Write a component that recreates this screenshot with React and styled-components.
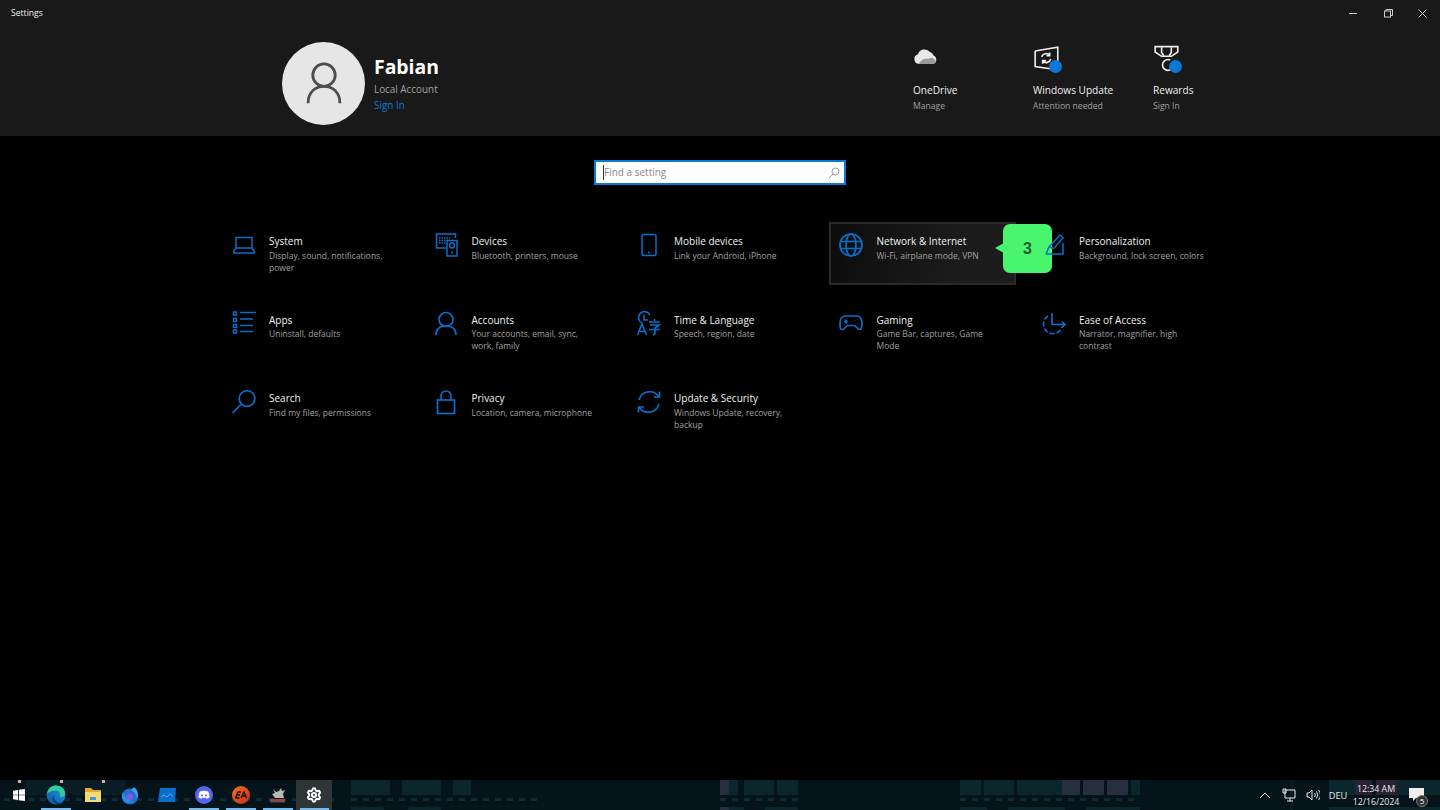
import React from "react";
import styled, { createGlobalStyle } from "styled-components";
import { Settings } from "lucide-react";

const BLUE = "#0a6fc9";
const FONT = `"Open Sans", "Noto Sans", "Liberation Sans", sans-serif`;

const GlobalStyle = createGlobalStyle`
    html, body {
        margin: 0;
        padding: 0;
        background: #000;
    }
    body {
        font-family: ${FONT};
        overflow: hidden;
    }
`;

const Page = styled.div`
    display: flex;
    flex-direction: column;
    width: 1440px;
    height: 810px;
    background: #000;
    color: #fff;
`;

const Header = styled.header`
    height: 136px;
    background: #191919;
    flex: none;
`;

const TitleBar = styled.div`
    display: flex;
    align-items: center;
    justify-content: space-between;
    height: 26px;
    padding-left: 11px;
    font-size: 8.6px;
    color: #f0f0f0;
`;

const TitleText = styled.span`
    margin-bottom: 1px;
`;

const WindowControls = styled.div`
    display: flex;
`;

const WindowButton = styled.div`
    display: flex;
    align-items: center;
    justify-content: center;
    width: 34.5px;
    height: 26px;
`;

const AccountRow = styled.div`
    display: flex;
    padding: 16px 0 0 282px;
`;

const Account = styled.div`
    display: flex;
    gap: 9px;
    width: 631px;
`;

const Avatar = styled.div`
    display: flex;
    align-items: center;
    justify-content: center;
    width: 83px;
    height: 83px;
    border-radius: 50%;
    background: #e6e6e6;
`;

const AccountText = styled.div`
    display: flex;
    flex-direction: column;
    padding-top: 11px;
`;

const AccountName = styled.div`
    font-size: 19.4px;
    line-height: 28px;
    font-weight: 700;
`;

const AccountKind = styled.div`
    font-size: 9.9px;
    line-height: 16px;
    color: #a0a0a0;
`;

const SignIn = styled.a`
    font-size: 9.9px;
    line-height: 16px;
    color: #0a78d6;
`;

const Services = styled.div`
    display: flex;
`;

const Service = styled.div`
    width: 120px;
`;

const ServiceIcon = styled.div`
    position: relative;
    width: 34px;
    height: 30px;
    margin-top: 3px;
`;

const Dot = styled.span`
    position: absolute;
    left: 16px;
    top: 15px;
    width: 13px;
    height: 13px;
    border-radius: 50%;
    background: #0a78d6;
`;

const ServiceTitle = styled.div`
    margin-top: 7px;
    font-size: 10.1px;
    line-height: 16px;
    color: #f0f0f0;
`;

const ServiceSub = styled.div`
    font-size: 8.6px;
    line-height: 16px;
    color: #a0a0a0;
`;

const SearchRow = styled.div`
    display: flex;
    justify-content: center;
    padding-top: 24px;
    flex: none;
`;

const SearchBox = styled.div`
    box-sizing: border-box;
    display: flex;
    align-items: center;
    justify-content: space-between;
    width: 252px;
    height: 25px;
    padding: 0 4px 0 7px;
    background: #fff;
    border: 2px solid #0a78d6;
    font-size: 10px;
    color: #8a8a8a;
`;

const Placeholder = styled.span`
    border-left: 1px solid #333;
    line-height: 15px;
`;

const Grid = styled.main`
    display: grid;
    grid-template-columns: repeat(5, 187px);
    grid-auto-rows: 63px;
    column-gap: 15.5px;
    row-gap: 15.7px;
    width: 997px;
    margin: 37px auto 0;
`;

const Cell = styled.div`
    position: relative;
    box-sizing: border-box;
    display: flex;
    padding: 8px 0 0 7px;
    border: 2px solid ${(p) => (p.$hover ? "#2b2b2b" : "transparent")};
    background: ${(p) =>
        p.$hover ? "linear-gradient(100deg, #0c0c0c 0%, #1c1c1c 70%)" : "transparent"};
`;

const CellIcon = styled.div`
    width: 26px;
    height: 26px;
    flex: none;
`;

const CellText = styled.div`
    margin-left: 12.5px;
    width: 128px;
`;

const CellTitle = styled.div`
    margin-top: 1px;
    font-size: 10px;
    line-height: 16.5px;
    color: #f2f2f2;
`;

const CellDesc = styled.div`
    font-size: 8.5px;
    line-height: 12px;
    color: #a0a0a0;
`;

const Badge = styled.div`
    position: absolute;
    left: 172px;
    top: 0;
    display: flex;
    align-items: center;
    justify-content: center;
    width: 49px;
    height: 49px;
    border-radius: 7px;
    background: #49f56c;
    color: #1d5a32;
    font-family: "Liberation Sans", sans-serif;
    font-size: 16px;
    font-weight: 700;
    &::before {
        content: "";
        position: absolute;
        left: -8px;
        top: 19px;
        border-style: solid;
        border-width: 5.5px 9px 5.5px 0;
        border-color: transparent #49f56c transparent transparent;
    }
`;

const Taskbar = styled.footer`
    position: relative;
    display: flex;
    align-items: stretch;
    justify-content: space-between;
    height: 30px;
    margin-top: auto;
    background: #05141a;
    flex: none;
`;

const Wallpaper = styled.svg`
    position: absolute;
    left: 0;
    top: 0;
`;

const TaskIcons = styled.div`
    position: relative;
    display: flex;
`;

const TaskButton = styled.div`
    position: relative;
    display: flex;
    align-items: center;
    justify-content: center;
    width: ${(p) => (p.$active ? "36px" : "37px")};
    background: ${(p) => (p.$active ? "#2e3638" : "transparent")};
    &::after {
        content: "";
        display: ${(p) => (p.$open ? "block" : "none")};
        position: absolute;
        left: 3.5px;
        right: 3.5px;
        bottom: 0;
        height: 2px;
        background: #76b9ed;
    }
`;

const Pip = styled.span`
    position: absolute;
    top: 0;
    left: ${(p) => p.$left}px;
    width: 3px;
    height: 3px;
    background: #e0a898;
`;

const Tray = styled.div`
    position: relative;
    display: flex;
    align-items: center;
    padding-right: 12px;
    color: #e8e8e8;
`;

const TrayIcon = styled.div`
    display: flex;
    align-items: center;
    justify-content: center;
    width: 24px;
`;

const TrayLang = styled.div`
    width: 26px;
    text-align: center;
    font-size: 9.2px;
`;

const Clock = styled.div`
    width: 50px;
    margin: 2px 3px 0 0;
    text-align: center;
    font-size: 8.8px;
    line-height: 13px;
`;

const Notify = styled.div`
    position: relative;
    display: flex;
    justify-content: center;
    width: 24px;
`;

const NotifyCount = styled.span`
    position: absolute;
    left: 12px;
    top: 7px;
    width: 12px;
    height: 12px;
    border-radius: 50%;
    background: #333;
    border: 1px solid #777;
    box-sizing: border-box;
    text-align: center;
    font-size: 8px;
    line-height: 10px;
    color: #fff;
`;

const Line = ({ children, size = 26, w = 1.5, stroke = BLUE }) => (
    <svg width={size} height={size} viewBox="0 0 26 26" fill="none" stroke={stroke} strokeWidth={w}>
        {children}
    </svg>
);

const ICONS = {
    system: (
        <Line>
            <path d="M5 16V5.500h16V16" />
            <path d="M2.700 21h20.600v-1.600L21 16H5l-2.300 3.400z" />
        </Line>
    ),
    devices: (
        <Line>
            <path d="M13 16H3.500V2h19v4" />
            <path d="M6 6h11M6 8.500h11M6 11h7" strokeDasharray="1.500 1" />
            <rect x="14" y="8.500" width="10" height="15.500" />
            <circle cx="19" cy="13.500" r="2.500" />
            <path d="M18 20.500h2" />
        </Line>
    ),
    mobile: (
        <Line>
            <rect x="6" y="2.500" width="14" height="21" rx="1.500" />
            <path d="M12 20.500h2" />
        </Line>
    ),
    network: (
        <Line w={1.700}>
            <circle cx="13" cy="13" r="11" />
            <ellipse cx="13" cy="13" rx="5" ry="11" />
            <path d="M2.500 9.500h21M2.500 16.500h21" />
        </Line>
    ),
    personalization: (
        <Line>
            <path d="M8 15L19 3l3 2.500-9 11" />
            <path d="M22 11v11H5" />
            <path d="M5 22l3-7 5 1.500" />
        </Line>
    ),
    apps: (
        <Line>
            <path d="M2.500 1h3v3h-3zM2.500 7.500h3v3h-3zM2.500 13.500h3v3h-3zM2.500 19h3v3h-3z" />
            <path d="M9 1.500h16M9 8h13M9 14.500h13M9 20.500h13" strokeWidth="1.700" />
        </Line>
    ),
    accounts: (
        <Line w={1.700}>
            <circle cx="13" cy="8.500" r="7" />
            <path d="M3 24c0-6 4-9 10-9s10 3 10 9" />
        </Line>
    ),
    time: (
        <Line w={1.600}>
            <path d="M6 12a6 6 0 1 1 8-8" />
            <path d="M8 4v5h4" />
            <path d="M1.500 24L6 13l4.500 11M3 20.500h6" />
            <path d="M13 11h11M18.500 8v2M14 14h9l-4 3v6l-2 1M13 18.500h11" />
        </Line>
    ),
    gaming: (
        <Line w={1.700}>
            <path d="M7 5h12c3 0 5 3 5 7.500s-.500 6-2.500 6-3.500-4-5.500-4h-6c-2 0-3.500 4-5.500 4S2 17.500 2 12.500 4 5 7 5z" />
            <path d="M6 10.500h4M8 8.500v4M16.500 9.500h.5M19 12h.5" />
        </Line>
    ),
    ease: (
        <Line w={1.700}>
            <path d="M7 5a9.500 9.500 0 1 0 14 11" strokeDasharray="5 2" />
            <path d="M11 2v11.500h13M21 10.500l3 3-3 3" />
        </Line>
    ),
    search: (
        <Line w={1.700}>
            <circle cx="16" cy="9.500" r="7.800" />
            <path d="M10.500 15L1.500 24" />
        </Line>
    ),
    privacy: (
        <Line w={1.700}>
            <rect x="4.500" y="11" width="17" height="13.500" />
            <path d="M8 11V7a5 5 0 0 1 10 0v4" />
        </Line>
    ),
    update: (
        <Line w={1.700}>
            <path d="M3 11a11 11 0 0 1 20-3" />
            <path d="M23.500 2.500V8H18" />
            <path d="M23 15a11 11 0 0 1-20 3" />
            <path d="M2.500 23.500V18H8" />
        </Line>
    ),
};

const SETTINGS = [
    ["system", "System", "Display, sound, notifications, power"],
    ["devices", "Devices", "Bluetooth, printers, mouse"],
    ["mobile", "Mobile devices", "Link your Android, iPhone"],
    ["network", "Network & Internet", "Wi-Fi, airplane mode, VPN"],
    ["personalization", "Personalization", "Background, lock screen, colors"],
    ["apps", "Apps", "Uninstall, defaults"],
    ["accounts", "Accounts", "Your accounts, email, sync, work, family"],
    ["time", "Time & Language", "Speech, region, date"],
    ["gaming", "Gaming", "Game Bar, captures, Game Mode"],
    ["ease", "Ease of Access", "Narrator, magnifier, high contrast"],
    ["search", "Search", "Find my files, permissions"],
    ["privacy", "Privacy", "Location, camera, microphone"],
    ["update", "Update & Security", "Windows Update, recovery, backup"],
];

const OneDriveIcon = () => (
    <svg width="26" height="22" viewBox="0 0 26 20">
        <path d="M6 18a5 5 0 0 1-1-9.800A7 7 0 0 1 17 6a5 5 0 0 1 3.500 3.500A4.500 4.500 0 0 1 20 18z" fill="#e8e8e8" />
        <path d="M6 18c1-4 6-6 9-5 3-2 7-1 8 3l-3 2z" fill="#9a9a9a" />
    </svg>
);

const UpdateIcon = () => (
    <svg width="28" height="28" viewBox="0 0 26 26" fill="none" stroke="#eee" strokeWidth="1.500">
        <path d="M2 5.500L23 2v14M16 22L2 20V5.500" />
        <path d="M8 11a4.500 4.500 0 0 1 7.500-1.500M16.500 13A4.500 4.500 0 0 1 9 15M15.500 7v3h-3M9 17.500v-3h3" />
    </svg>
);

const RewardsIcon = () => (
    <svg width="28" height="28" viewBox="0 0 26 26" fill="none" stroke="#eee" strokeWidth="1.500">
        <path d="M2 1.500h21v5l-6 4h-9l-6-4z" />
        <path d="M8 2v5l2 3M17 2v5l-2 3" />
        <path d="M16 14a5 5 0 1 0 0 9" />
    </svg>
);

const SearchGlyph = () => (
    <svg width="12" height="12" viewBox="0 0 12 12" fill="none" stroke="#9a9a9a">
        <circle cx="7.500" cy="4.500" r="3.500" />
        <path d="M5 7l-4 4" />
    </svg>
);

const TOP_BLOCKS = [
    [351, 39], [402, 39], [453, 18],
    [729, 9], [744, 30], [777, 21],
    [960, 21], [984, 30], [1017, 45],
    [1131, 9],
    [1329, 26], [1397, 43],
];
const TOP_PURPLE = [[720, 9], [1062, 18], [1083, 21], [1107, 21]];
const TOP_PINK = [[1355, 17], [1376, 21]];
const LOW_BLOCKS = [
    [351, 33], [408, 33], [729, 15], [765, 33], [960, 27], [1008, 57], [1086, 54], [1329, 111],
];
const DASH_RUNS = [[351, 16], [720, 7], [960, 15], [4, 28]];

const TaskbarWallpaper = () => (
    <Wallpaper width="1440" height="30" viewBox="0 0 1440 30">
        <g fill="#0b272d">
            {TOP_BLOCKS.map(([x, w]) => (
                <rect key={x} x={x} y="0" width={w} height="15" />
            ))}
            {LOW_BLOCKS.map(([x, w]) => (
                <rect key={x} x={x} y="27" width={w} height="3" />
            ))}
            <rect x="25" y="0" width="100" height="15" opacity="0.5" />
        </g>
        <g fill="#262f40">
            {TOP_PURPLE.map(([x, w]) => (
                <rect key={x} x={x} y="0" width={w} height="15" />
            ))}
            <rect x="720" y="27" width="9" height="3" />
        </g>
        <g fill="#2a2233">
            {TOP_PINK.map(([x, w]) => (
                <rect key={x} x={x} y="0" width={w} height="15" />
            ))}
        </g>
        <g fill="#0f2a30">
            {DASH_RUNS.flatMap(([start, n]) =>
                Array.from({ length: n }, (_, i) => (
                    <rect key={`${start}-${i}`} x={start + i * 12} y="18" width="6" height="3" />
                ))
            )}
        </g>
        <rect x="1290" y="0" width="3" height="30" fill="#0a1c24" />
    </Wallpaper>
);

const TASK_APPS = [
    {
        key: "start",
        icon: (
            <svg width="12" height="12" viewBox="0 0 14 14" fill="#fff">
                <path d="M0 2l6-.9V6.600H0zM7 .9L14 0v6.600H7zM0 7.400h6v5.500L0 12zM7 7.400h7V14l-7-1z" />
            </svg>
        ),
    },
    {
        key: "edge",
        open: true,
        icon: (
            <svg width="20" height="20" viewBox="0 0 20 20">
                <defs>
                    <linearGradient id="edgeA" x1="0" y1="1" x2="1" y2="0">
                        <stop offset="0" stopColor="#0c59a4" />
                        <stop offset="1" stopColor="#1b9de2" />
                    </linearGradient>
                </defs>
                <circle cx="10" cy="10" r="9.500" fill="url(#edgeA)" />
                <path d="M1 9C2 3 6 .500 10 .500c5 0 9 3.500 9 8 0 3-3 4-5 3 1-3-1-6-4-6C6 5.500 2.500 7 1 9z" fill="#36c99a" />
                <path d="M8 10c-1 4 2 8 7 8 1 0 2-.500 3-1-3 3-8 3-10.500 0C6 15 6 12 8 10z" fill="#0f3d7a" />
            </svg>
        ),
    },
    {
        key: "explorer",
        icon: (
            <svg width="18" height="16" viewBox="0 0 18 16">
                <path d="M1 1h6l2 2h8v3H1z" fill="#e5a92f" />
                <path d="M1 5h16v10H1z" fill="#f8d775" />
                <path d="M6 10h6v3H6z" fill="#3b9ad9" />
            </svg>
        ),
    },
    {
        key: "firefox",
        icon: (
            <svg width="18" height="19" viewBox="0 0 18 19">
                <circle cx="9" cy="10.500" r="8" fill="#1e6fd0" />
                <path d="M13 1c4 3 5 8 3 12-1-5-3-8-6-9 1-1 2-2 3-3z" fill="#3aa0ee" />
                <circle cx="8.500" cy="11" r="3.500" fill="#7b5be0" />
                <path d="M2 6c1 5 5 9 10 9-3 2.500-9 2-11-3-.500-2 0-4 1-6z" fill="#2b8fe8" />
            </svg>
        ),
    },
    {
        key: "monitor",
        icon: (
            <svg width="18" height="14" viewBox="0 0 18 14">
                <path d="M2 0h16l-1 14H0z" fill="#0a6fc9" />
                <path d="M3 9l3-2 3 2 3-3 3 2" fill="none" stroke="#6ab4ee" strokeWidth="0.800" />
            </svg>
        ),
    },
    {
        key: "discord",
        open: true,
        icon: (
            <svg width="18" height="18" viewBox="0 0 18 18">
                <circle cx="9" cy="9" r="9" fill="#5865f2" />
                <path d="M5 5.500c2.500-1 5.500-1 8 0 1 1.500 1.500 3.500 1.500 6-1 .7-2 1.200-3 1.300l-.8-1.100H7.300l-.8 1.100c-1-.1-2-.6-3-1.300 0-2.500.5-4.500 1.500-6z" fill="#fff" />
                <circle cx="7" cy="9.500" r="1.100" fill="#5865f2" />
                <circle cx="11" cy="9.500" r="1.100" fill="#5865f2" />
            </svg>
        ),
    },
    {
        key: "ea",
        open: true,
        icon: (
            <svg width="18" height="18" viewBox="0 0 18 18">
                <defs>
                    <linearGradient id="eaA" x1="0" y1="0" x2="1" y2="1">
                        <stop offset="0" stopColor="#f4711f" />
                        <stop offset="1" stopColor="#c22e1a" />
                    </linearGradient>
                </defs>
                <circle cx="9" cy="9" r="9" fill="url(#eaA)" />
                <path d="M3.500 12L6 6h3M5 9h3M3.500 12h4M9 12l3-6 2.500 6M11 10h3" fill="none" stroke="#1a0c08" strokeWidth="1.300" />
            </svg>
        ),
    },
    {
        key: "gimp",
        open: true,
        icon: (
            <svg width="18" height="18" viewBox="0 0 18 18">
                <path d="M4 3l3 3 3-1 2-3 1 3 3-1-2 4 1 4H6L3 8l3-1z" fill="#b9b9b9" />
                <rect x="1" y="13" width="15" height="2" fill="#b33a3a" />
                <rect x="1" y="15" width="15" height="1.500" fill="#555" />
            </svg>
        ),
    },
    {
        key: "settings",
        open: true,
        active: true,
        icon: <Settings size={16} color="#fff" strokeWidth={3} />,
    },
];

const App = () => (
    <Page>
        <GlobalStyle />
        <Header>
            <TitleBar>
                <TitleText>Settings</TitleText>
                <WindowControls>
                    <WindowButton>
                        <svg width="9" height="9" viewBox="0 0 9 9" stroke="#ccc"><path d="M0 4.500h8" /></svg>
                    </WindowButton>
                    <WindowButton>
                        <svg width="9" height="9" viewBox="0 0 9 9" fill="none" stroke="#ccc"><rect x=".5" y="2" width="6" height="6" /><path d="M2 2V.5h6.500V6.500H7" /></svg>
                    </WindowButton>
                    <WindowButton>
                        <svg width="9" height="9" viewBox="0 0 9 9" stroke="#ccc"><path d="M.5.500l8 8M8.500.500l-8 8" /></svg>
                    </WindowButton>
                </WindowControls>
            </TitleBar>
            <AccountRow>
                <Account>
                    <Avatar>
                        <svg width="36" height="43" viewBox="0 0 38 46" fill="none" stroke="#4d4d4d" strokeWidth="3">
                            <circle cx="19" cy="14" r="12" />
                            <path d="M2 44c0-11 7-18 17-18s17 7 17 18" />
                        </svg>
                    </Avatar>
                    <AccountText>
                        <AccountName>Fabian</AccountName>
                        <AccountKind>Local Account</AccountKind>
                        <SignIn>Sign In</SignIn>
                    </AccountText>
                </Account>
                <Services>
                    <Service>
                        <ServiceIcon><OneDriveIcon /></ServiceIcon>
                        <ServiceTitle>OneDrive</ServiceTitle>
                        <ServiceSub>Manage</ServiceSub>
                    </Service>
                    <Service>
                        <ServiceIcon><UpdateIcon /><Dot /></ServiceIcon>
                        <ServiceTitle>Windows Update</ServiceTitle>
                        <ServiceSub>Attention needed</ServiceSub>
                    </Service>
                    <Service>
                        <ServiceIcon><RewardsIcon /><Dot /></ServiceIcon>
                        <ServiceTitle>Rewards</ServiceTitle>
                        <ServiceSub>Sign In</ServiceSub>
                    </Service>
                </Services>
            </AccountRow>
        </Header>
        <SearchRow>
            <SearchBox>
                <Placeholder>Find a setting</Placeholder>
                <SearchGlyph />
            </SearchBox>
        </SearchRow>
        <Grid>
            {SETTINGS.map(([key, title, desc]) => (
                <Cell key={key} $hover={key === "network"}>
                    <CellIcon>{ICONS[key]}</CellIcon>
                    <CellText>
                        <CellTitle>{title}</CellTitle>
                        <CellDesc>{desc}</CellDesc>
                    </CellText>
                    {key === "network" && <Badge>3</Badge>}
                </Cell>
            ))}
        </Grid>
        <Taskbar>
            <TaskbarWallpaper />
            <TaskIcons>
                {TASK_APPS.map((app) => (
                    <TaskButton key={app.key} $open={app.open} $active={app.active}>
                        {app.icon}
                    </TaskButton>
                ))}
                <Pip $left={18} />
                <Pip $left={60} />
                <Pip $left={102} />
            </TaskIcons>
            <Tray>
                <TrayIcon>
                    <svg width="12" height="8" viewBox="0 0 12 8" fill="none" stroke="#e8e8e8"><path d="M1 7l5-5 5 5" /></svg>
                </TrayIcon>
                <TrayIcon>
                    <svg width="14" height="14" viewBox="0 0 14 14" fill="none" stroke="#e8e8e8"><path d="M3 2h10v8H3zM8 10v3M5 13h6M1 1h3v4H1z" /></svg>
                </TrayIcon>
                <TrayIcon>
                    <svg width="14" height="14" viewBox="0 0 14 14" fill="none" stroke="#e8e8e8"><path d="M1 5h2l3-3v10L3 9H1zM8.500 5a3 3 0 0 1 0 4M10.500 3.500a6 6 0 0 1 0 7M12.500 2a8 8 0 0 1 0 10" /></svg>
                </TrayIcon>
                <TrayLang>DEU</TrayLang>
                <Clock>12:34 AM<br />12/16/2024</Clock>
                <Notify>
                    <svg width="15" height="14" viewBox="0 0 15 14" fill="#eee"><path d="M0 0h15v10H7l-3 3v-3H0z" /></svg>
                    <NotifyCount>5</NotifyCount>
                </Notify>
            </Tray>
        </Taskbar>
    </Page>
);

export default App;
